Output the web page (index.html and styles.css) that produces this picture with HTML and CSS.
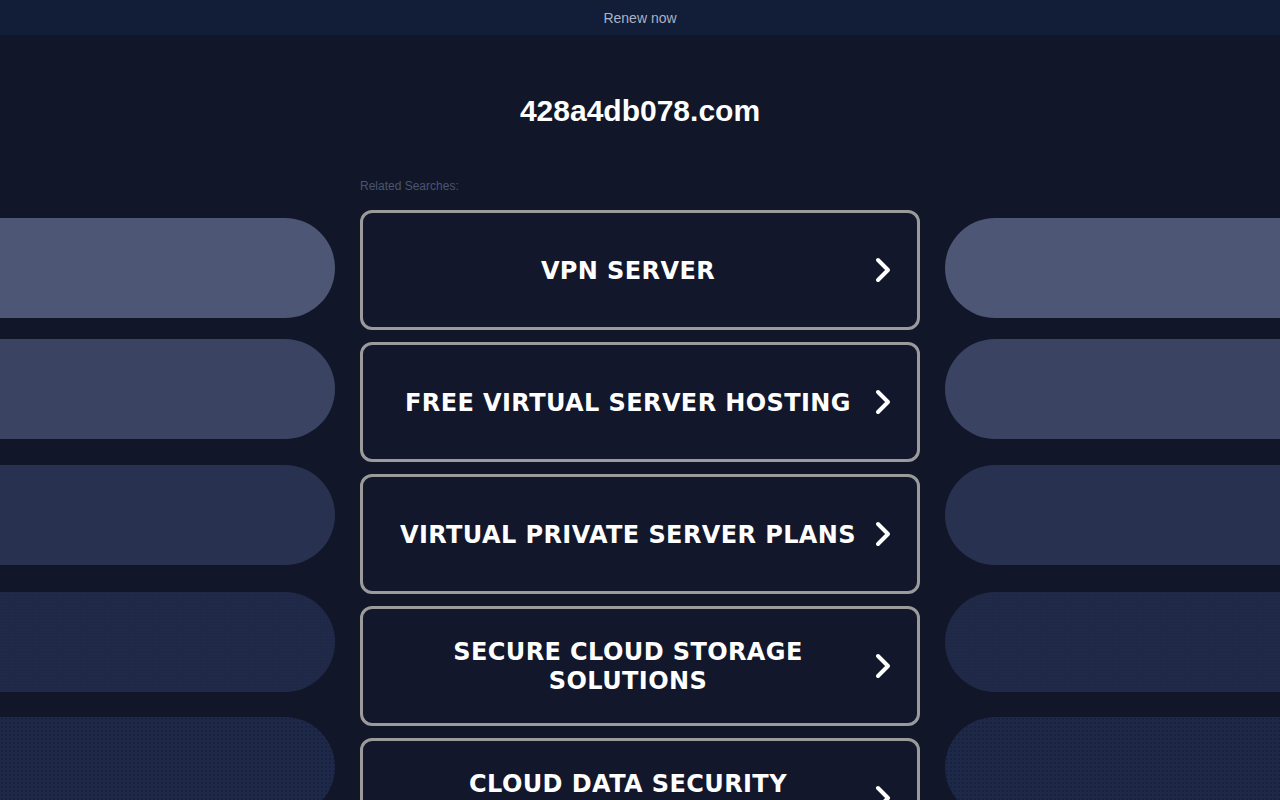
FILE: index.html
```html
<!DOCTYPE html>
<html lang="en">
<head>
<meta charset="utf-8">
<title>428a4db078.com</title>
<link rel="stylesheet" href="styles.css">
</head>
<body>
<div class="topbar"><a class="renew" href="#">Renew now</a></div>
<div class="main">
  <div class="side side-left">
    <div class="pill p1"></div>
    <div class="pill p2"></div>
    <div class="pill p3"></div>
    <div class="pill p4"></div>
    <div class="pill p5"></div>
  </div>
  <div class="center">
    <h1 class="domain">428a4db078.com</h1>
    <div class="related">Related Searches:</div>
    <div class="links">
      <a class="link" href="#"><span class="label">VPN SERVER</span><svg class="chev" viewBox="0 0 16 26" width="16" height="26"><path d="M3 3 L13 13 L3 23" fill="none" stroke="#fff" stroke-width="4" stroke-linecap="round" stroke-linejoin="round"/></svg></a>
      <a class="link" href="#"><span class="label">FREE VIRTUAL SERVER HOSTING</span><svg class="chev" viewBox="0 0 16 26" width="16" height="26"><path d="M3 3 L13 13 L3 23" fill="none" stroke="#fff" stroke-width="4" stroke-linecap="round" stroke-linejoin="round"/></svg></a>
      <a class="link" href="#"><span class="label">VIRTUAL PRIVATE SERVER PLANS</span><svg class="chev" viewBox="0 0 16 26" width="16" height="26"><path d="M3 3 L13 13 L3 23" fill="none" stroke="#fff" stroke-width="4" stroke-linecap="round" stroke-linejoin="round"/></svg></a>
      <a class="link" href="#"><span class="label">SECURE CLOUD STORAGE SOLUTIONS</span><svg class="chev" viewBox="0 0 16 26" width="16" height="26"><path d="M3 3 L13 13 L3 23" fill="none" stroke="#fff" stroke-width="4" stroke-linecap="round" stroke-linejoin="round"/></svg></a>
      <a class="link" href="#"><span class="label">CLOUD DATA SECURITY SERVICES</span><svg class="chev" viewBox="0 0 16 26" width="16" height="26"><path d="M3 3 L13 13 L3 23" fill="none" stroke="#fff" stroke-width="4" stroke-linecap="round" stroke-linejoin="round"/></svg></a>
    </div>
  </div>
  <div class="side side-right">
    <div class="pill p1"></div>
    <div class="pill p2"></div>
    <div class="pill p3"></div>
    <div class="pill p4"></div>
    <div class="pill p5"></div>
  </div>
</div>
</body>
</html>
```
FILE: styles.css
```css
html, body {
  margin: 0;
  padding: 0;
  background: #111729;
  font-family: "Liberation Sans", Arial, sans-serif;
  overflow: hidden;
  height: 800px;
}

.topbar {
  height: 35px;
  background: #121d38;
  display: flex;
  align-items: center;
  justify-content: center;
}

.renew {
  color: #a9b2c4;
  font-size: 14px;
  text-decoration: none;
  line-height: 16px;
  margin-top: 1px;
}

.main {
  display: grid;
  grid-template-columns: 1fr 560px 1fr;
}

.side {
  display: flex;
  flex-direction: column;
  padding-top: 183px;
}

.side-left {
  padding-right: 25px;
}

.side-right {
  padding-left: 25px;
}

.pill {
  height: 100px;
  flex: none;
}

.side-left .pill {
  border-radius: 0 50px 50px 0;
}

.side-right .pill {
  border-radius: 50px 0 0 50px;
}

.p1 { background: #4d5775; }
.p2 { background: #3a4462; margin-top: 21px; }
.p3 { background: #283150; margin-top: 26px; }
.p4 {
  background-color: #1f2947;
  background-image: radial-gradient(circle, rgba(70, 85, 125, 0.12) 0.6px, transparent 0.9px);
  background-size: 3px 3px;
  margin-top: 27px;
}
.p5 {
  background-color: #1e2949;
  background-image: radial-gradient(circle, rgba(12, 18, 38, 0.3) 0.7px, transparent 1px);
  background-size: 4px 4px;
  margin-top: 25px;
}

.center {
  display: flex;
  flex-direction: column;
}

.domain {
  margin: 58px 0 0;
  text-align: center;
  color: #ffffff;
  font-size: 30px;
  line-height: 36px;
  font-weight: bold;
  font-family: "Liberation Sans", Arial, sans-serif;
}

.related {
  margin-top: 50px;
  color: #4a5570;
  font-size: 12px;
  line-height: 15px;
}

.links {
  margin-top: 16px;
  display: flex;
  flex-direction: column;
  gap: 12px;
}

.link {
  box-sizing: border-box;
  height: 120px;
  border: 3px solid #9b9b9b;
  border-radius: 12px;
  background: #12172b;
  display: flex;
  align-items: center;
  padding: 0 26px 0 36px;
  text-decoration: none;
  color: #ffffff;
}

.label {
  width: 458px;
  flex: none;
  margin-right: 18px;
  text-align: center;
  font-family: "DejaVu Sans", Verdana, sans-serif;
  font-weight: bold;
  font-size: 24px;
  letter-spacing: 0.4px;
  line-height: 29px;
  margin-top: 2px;
}

.chev {
  flex: none;
  display: block;
}
```
